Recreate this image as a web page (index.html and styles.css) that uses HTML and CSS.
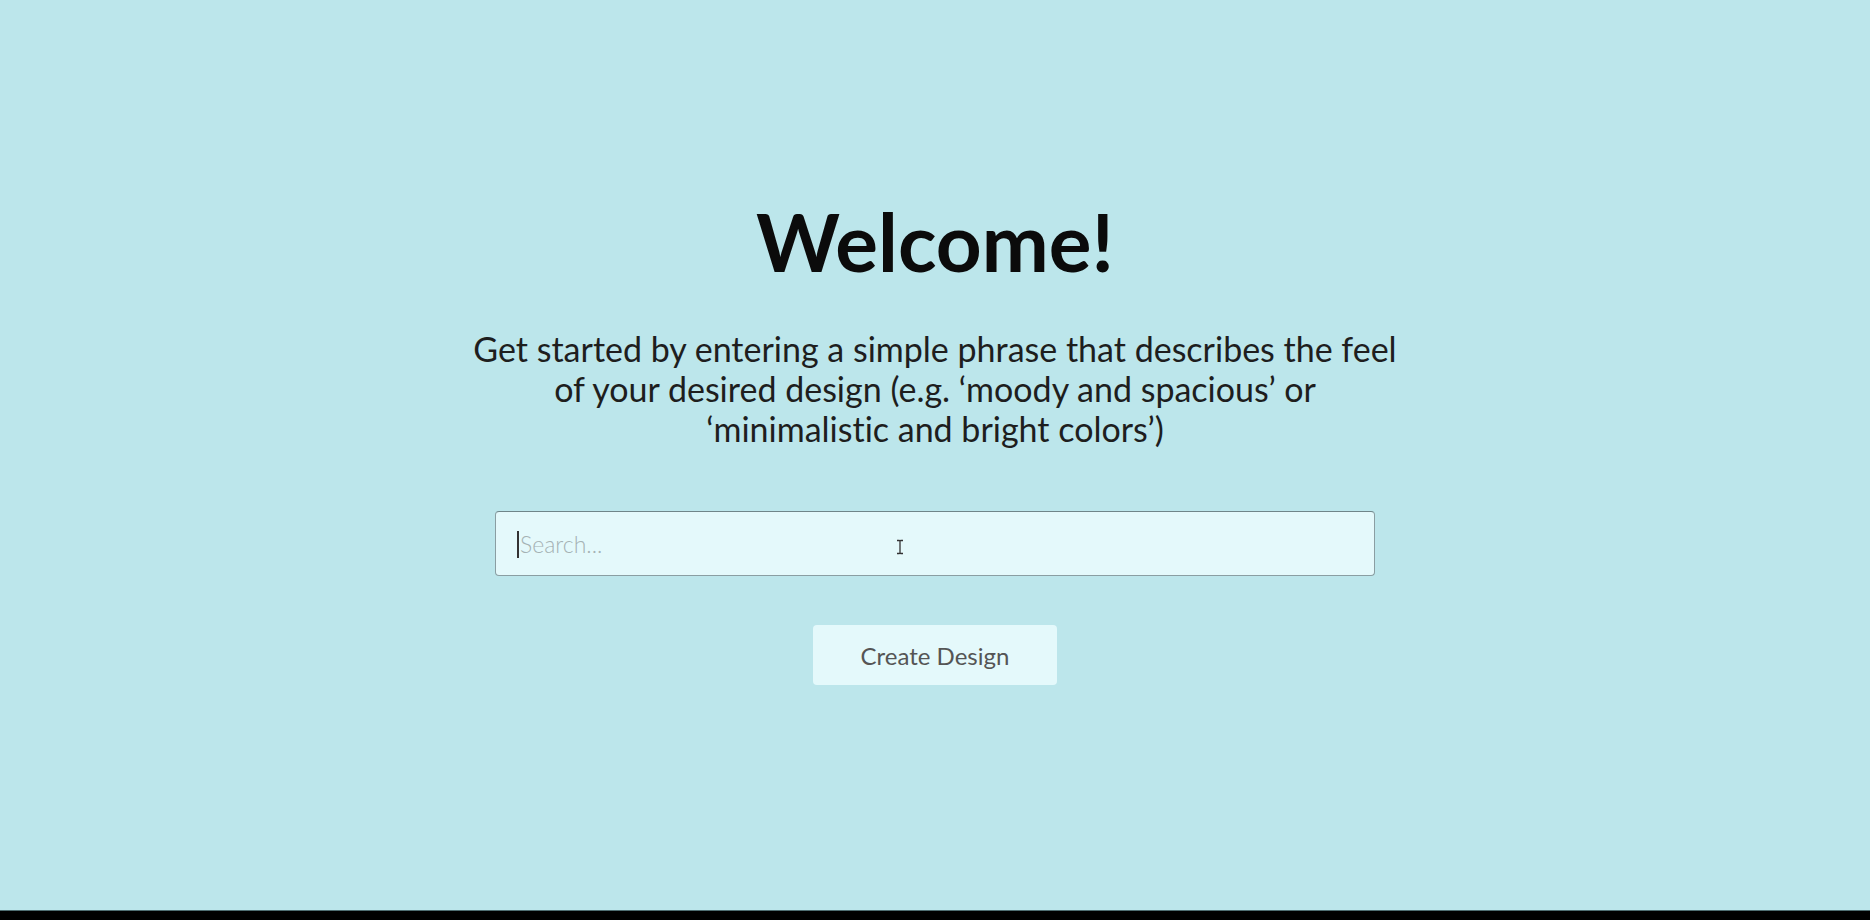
FILE: index.html
```html
<!DOCTYPE html>
<html lang="en">
<head>
<meta charset="utf-8">
<title>Welcome</title>
<link rel="stylesheet" href="styles.css">
</head>
<body>
<div class="page">
  <main class="hero">
    <h1 class="title">Welcome!</h1>
    <p class="lead">Get started by entering a simple phrase that describes the feel of your desired design (e.g. ‘moody and spacious’ or ‘minimalistic and bright colors’)</p>
    <div class="search">
      <span class="caret"></span>
      <input class="search-input" type="text" placeholder="Search...">
      <svg class="ibeam" width="8" height="16" viewBox="0 0 8 16"><path d="M1 1.5h2.2L4 2.3l.8-.8H7M4 2.3v11.4M1 14.5h2.2l.8-.8.8.8H7" fill="none" stroke="#333" stroke-width="1.3"/></svg>
    </div>
    <button class="create" type="button">Create Design</button>
  </main>
  <div class="bottom-bar"></div>
</div>
</body>
</html>
```
FILE: styles.css
```css
* { box-sizing: border-box; }
html, body { margin: 0; padding: 0; }
body {
  font-family: Lato, "Open Sans", sans-serif;
  font-variant-ligatures: none;
  background: #000;
}
.page {
  height: 920px;
  display: flex;
  flex-direction: column;
}
.hero {
  flex: 1;
  background: #bce6eb;
  display: flex;
  flex-direction: column;
  align-items: center;
  padding-top: 193px;
}
.title {
  margin: 0;
  font-size: 80px;
  line-height: 1.2;
  font-weight: 700;
  color: #0b0b0b;
}
.lead {
  margin: 40px 0 0;
  width: 935px;
  text-align: center;
  font-size: 34px;
  line-height: 40px;
  color: #1e1e1e;
}
.search {
  position: relative;
  margin-top: 62px;
  width: 880px;
  height: 65px;
}
.search-input {
  width: 100%;
  height: 100%;
  border: 1px solid #8a9ea2;
  border-top-color: #6f8589;
  border-radius: 4px;
  background: #e4f9fb;
  padding: 0 0 0 24px;
  font-family: Lato, sans-serif;
  font-size: 23px;
  font-weight: 300;
  color: #333;
  outline: none;
}
.search-input::placeholder { color: #a5b2b4; }
.caret {
  position: absolute;
  left: 22px;
  top: 20px;
  width: 2px;
  height: 27px;
  background: #333;
}
.ibeam {
  position: absolute;
  left: 401px;
  top: 28px;
}
.create {
  margin-top: 49px;
  width: 244px;
  height: 60px;
  border: none;
  border-radius: 4px;
  background: #e4f9fb;
  font-family: Lato, sans-serif;
  font-size: 24px;
  font-weight: 400;
  color: #555;
  cursor: pointer;
}
.bottom-bar {
  height: 10px;
  background: #000;
  border-top: 1px solid #4f6e72;
}
```
